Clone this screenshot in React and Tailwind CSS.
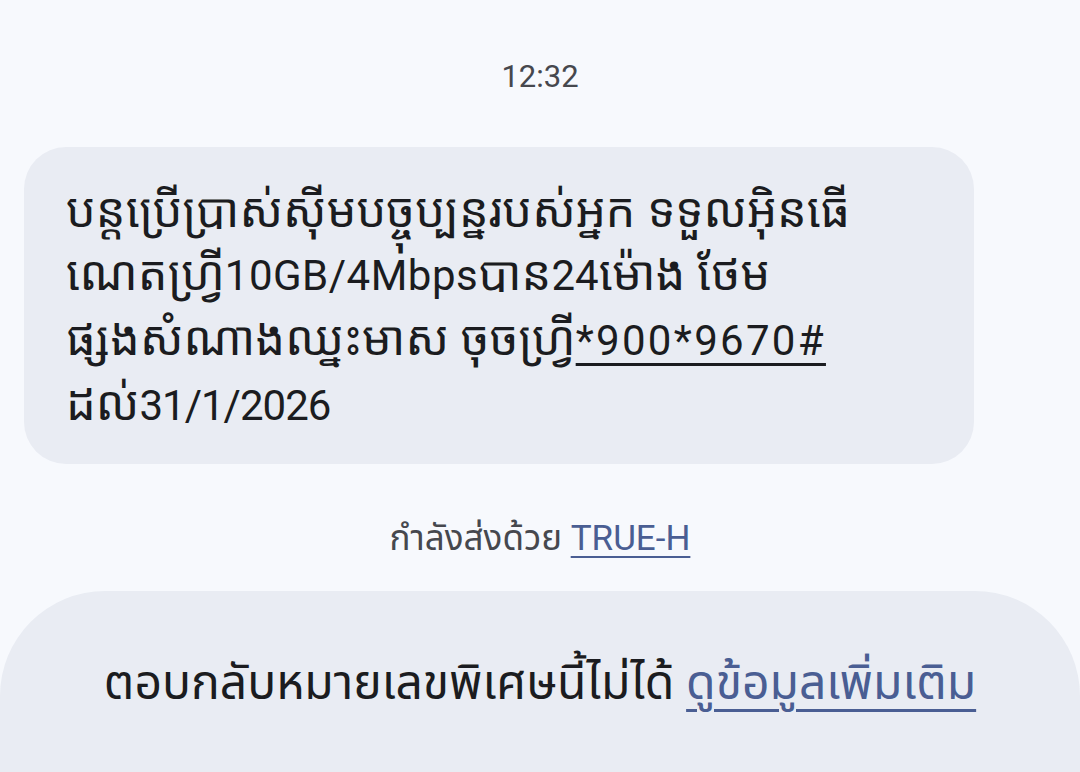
export default function App() {
  const latin = 'text-[42px]';

  return (
    <div className="min-h-screen h-[772px] overflow-hidden bg-[#f7f9fd] flex flex-col items-center font-['Roboto','Noto_Sans_Khmer','Noto_Sans_Thai',sans-serif]">
      <div className="pt-[57px] text-[31px] leading-[40px] text-[#46484e]">12:32</div>

      <div className="self-start ml-6 mt-[50px] w-[950px] h-[317px] rounded-[42px] bg-[#e9ecf3] px-[42px] py-[32px] text-[47px] leading-[63px] text-[#1b1c20]">
        <div className="whitespace-nowrap">បន្តប្រើប្រាស់ស៊ីមបច្ចុប្បន្នរបស់អ្នក ទទួលអ៊ិនធើ</div>
        <div className="whitespace-nowrap">
          ណេតហ្វ្រី<span className={`${latin} tracking-[0.5px]`}>10GB/4Mbps</span>បាន<span className={latin}>24</span>ម៉ោង ថែម
        </div>
        <div className="whitespace-nowrap">
          ផ្សងសំណាងឈ្នះមាស ចុចហ្វ្រី
          <span className={`${latin} tracking-[2.3px] underline decoration-[3px] underline-offset-[8px]`}>*900*9670#</span>
        </div>
        <div className="whitespace-nowrap">
          ដល់<span className={`${latin} tracking-[-1px]`}>31/1/2026</span>
        </div>
      </div>

      <div className="mt-[51px] text-[35px] leading-[48px] text-[#46484e]">
        กำลังส่งด้วย{' '}
        <span className="text-[#4a5e93] underline decoration-2 underline-offset-[6px]">TRUE-H</span>
      </div>

      <div className="mt-[28px] w-full flex-1 rounded-t-[105px] bg-[#e9ecf3] flex justify-center pt-[60px]">
        <div className="text-[48px] leading-[64px] text-[#1b1c20] whitespace-nowrap">
          ตอบกลับหมายเลขพิเศษนี้ไม่ได้{' '}
          <span className="text-[#4a5e93] underline decoration-[3px] underline-offset-[10px]">ดูข้อมูลเพิ่มเติม</span>
        </div>
      </div>
    </div>
  );
}
